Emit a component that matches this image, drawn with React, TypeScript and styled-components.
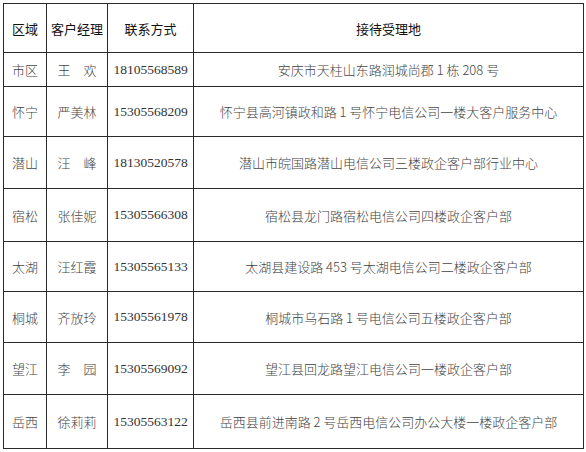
import { createGlobalStyle } from "styled-components"
import styled from "styled-components"

const GlobalStyle = createGlobalStyle`
  html, body {
    margin: 0;
    padding: 0;
    background: #ffffff;
  }
`

const Page = styled.div`
  width: 586px;
  height: 452px;
  padding: 3px 0 0 3px;
  box-sizing: border-box;
  background: #fff;
`

const Table = styled.table`
  border-collapse: collapse;
  table-layout: fixed;
  width: 581px;
  font-family: "Noto Sans CJK SC", "Liberation Serif", serif;
  font-size: 13px;
  color: #444;

  td, th {
    border: 1px solid #2a2a2a;
    padding: 0;
    text-align: center;
    vertical-align: middle;
    white-space: nowrap;
    overflow: hidden;
  }
`

const HeadCell = styled.th`
  font-weight: 400;
  color: #111;
  font-size: 13px;
`

const Row = styled.tr<{ $h: number }>`
  height: ${(p) => p.$h}px;
`

const Phone = styled.td`
  font-family: "Liberation Serif", serif;
  font-size: 13.5px;
  color: #333;
`

const Addr = styled.td`
  font-weight: 300;
`

const Plain = styled.td`
  font-weight: 300;
`

const rows = [
  { area: "市区", name: "王　欢", phone: "18105568589", addr: "安庆市天柱山东路润城尚郡 1 栋 208 号", h: 34 },
  { area: "怀宁", name: "严美林", phone: "15305568209", addr: "怀宁县高河镇政和路 1 号怀宁电信公司一楼大客户服务中心", h: 50 },
  { area: "潜山", name: "汪　峰", phone: "18130520578", addr: "潜山市皖国路潜山电信公司三楼政企客户部行业中心", h: 52 },
  { area: "宿松", name: "张佳妮", phone: "15305566308", addr: "宿松县龙门路宿松电信公司四楼政企客户部", h: 53 },
  { area: "太湖", name: "汪红霞", phone: "15305565133", addr: "太湖县建设路 453 号太湖电信公司二楼政企客户部", h: 50 },
  { area: "桐城", name: "齐放玲", phone: "15305561978", addr: "桐城市乌石路 1 号电信公司五楼政企客户部", h: 51 },
  { area: "望江", name: "李　园", phone: "15305569092", addr: "望江县回龙路望江电信公司一楼政企客户部", h: 52 },
  { area: "岳西", name: "徐莉莉", phone: "15305563122", addr: "岳西县前进南路 2 号岳西电信公司办公大楼一楼政企客户部", h: 54 },
]

export default function App() {
  return (
    <Page>
      <GlobalStyle />
      <Table>
        <colgroup>
          <col style={{ width: 43 }} />
          <col style={{ width: 61 }} />
          <col style={{ width: 86 }} />
          <col />
        </colgroup>
        <thead>
          <Row $h={49}>
            <HeadCell>区域</HeadCell>
            <HeadCell>客户经理</HeadCell>
            <HeadCell>联系方式</HeadCell>
            <HeadCell>接待受理地</HeadCell>
          </Row>
        </thead>
        <tbody>
          {rows.map((r) => (
            <Row key={r.area} $h={r.h}>
              <Plain>{r.area}</Plain>
              <Plain>{r.name}</Plain>
              <Phone>{r.phone}</Phone>
              <Addr>{r.addr}</Addr>
            </Row>
          ))}
        </tbody>
      </Table>
    </Page>
  )
}
